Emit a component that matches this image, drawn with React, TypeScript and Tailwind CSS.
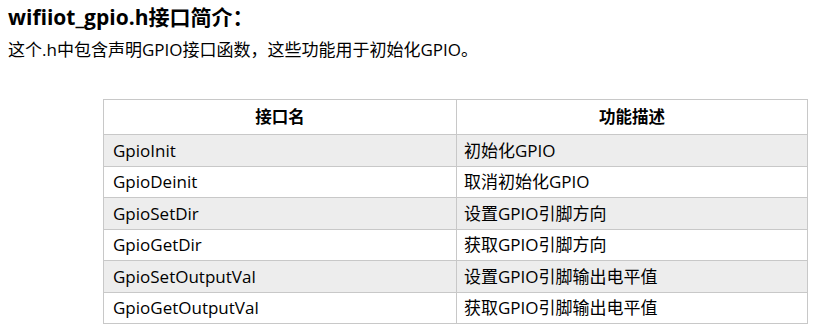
import React from "react";

const rows: [string, string][] = [
  ["GpioInit", "初始化GPIO"],
  ["GpioDeinit", "取消初始化GPIO"],
  ["GpioSetDir", "设置GPIO引脚方向"],
  ["GpioGetDir", "获取GPIO引脚方向"],
  ["GpioSetOutputVal", "设置GPIO引脚输出电平值"],
  ["GpioGetOutputVal", "获取GPIO引脚输出电平值"],
];

export default function App() {
  return (
    <div
      className="w-[820px] h-[330px] bg-white text-black overflow-hidden"
      style={{ fontFamily: '"Open Sans", "Noto Sans CJK SC", sans-serif' }}
    >
      <div className="pl-[8px] pt-[2px] text-[21px] font-bold leading-[30px]">wifiiot_gpio.h接口简介：</div>
      <div className="pl-[8px] mt-[6px] text-[17px] leading-[24px]">这个.h中包含声明GPIO接口函数，这些功能用于初始化GPIO。</div>
      <div className="ml-[103px] mt-[37px] w-[705px] border-[1.5px] border-[#c8c8c8]">
        <div className="grid grid-cols-[353px_1fr] h-[34px] bg-white">
          <div className="border-r-[1.5px] border-[#c8c8c8] flex items-center justify-center text-[16.5px] font-bold">接口名</div>
          <div className="flex items-center justify-center text-[16.5px] font-bold">功能描述</div>
        </div>
        {rows.map(([a, b], i) => (
          <div
            key={a}
            className={`grid grid-cols-[353px_1fr] h-[31.5px] border-t-[1.5px] border-[#c8c8c8] ${i % 2 === 0 ? "bg-[#ededed]" : "bg-white"}`}
          >
            <div className="border-r-[1.5px] border-[#c8c8c8] flex items-center pl-[9px] text-[17px]">{a}</div>
            <div className="flex items-center pl-[7px] text-[17px]">{b}</div>
          </div>
        ))}
      </div>
    </div>
  );
}
